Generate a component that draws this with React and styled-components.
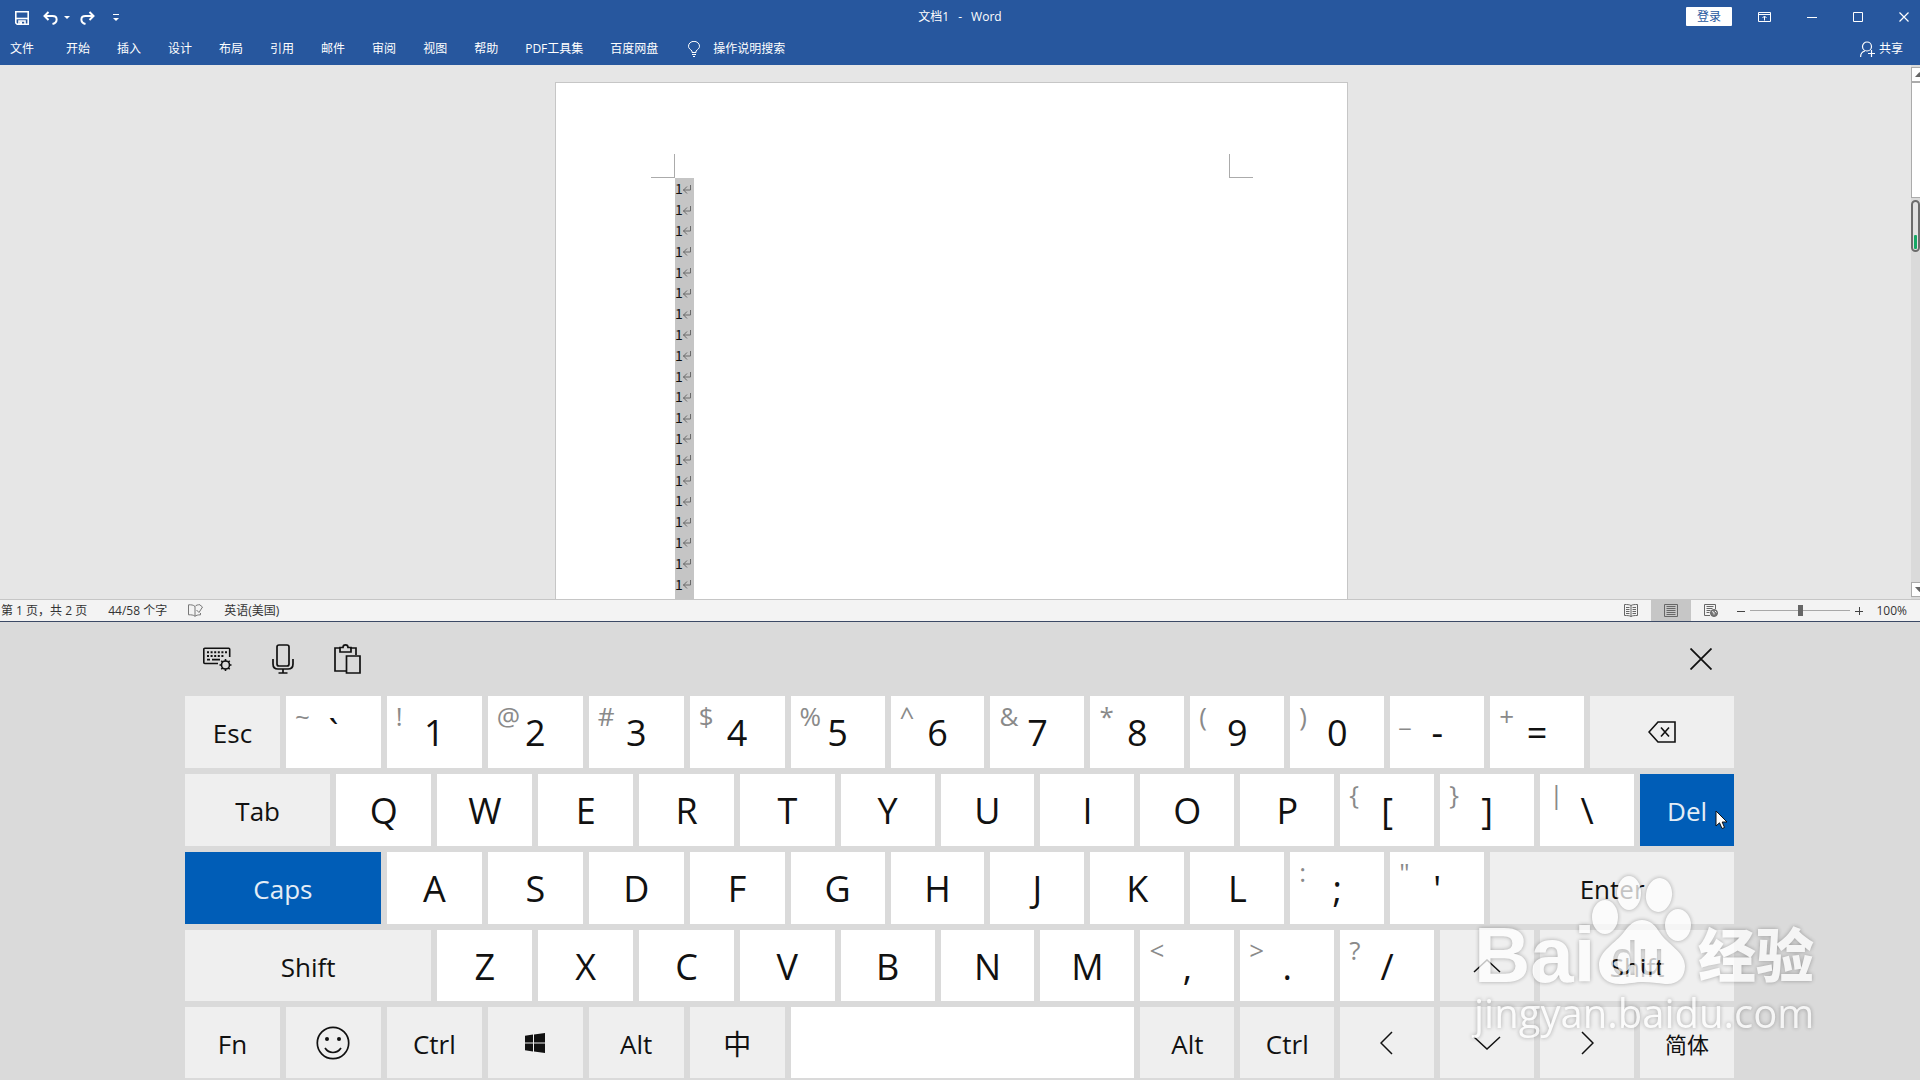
import React from "react";
import styled, { createGlobalStyle, css } from "styled-components";

const GlobalStyle = createGlobalStyle`
  *, *::before, *::after { box-sizing: border-box; }
  body {
    margin: 0;
    font-family: "Open Sans", "Noto Sans CJK SC", sans-serif;
    font-size: 12px;
    background: #dadada;
  }
  button, input { font: inherit; color: inherit; }
  button { border: 0; padding: 0; background: none; }
  svg { display: block; }
`;

const Screen = styled.div`
  display: flex;
  flex-direction: column;
  height: 100vh;
  overflow: hidden;
`;

/* ---------- Word window ---------- */

const WordWindow = styled.section`
  display: flex;
  flex-direction: column;
  flex: none;
  height: 622px;
  border-bottom: 1px solid #3c4a66;
`;

const Header = styled.header`
  flex: none;
  background: #27579e;
  color: #fff;
`;

const TitleBar = styled.div`
  display: grid;
  grid-template-columns: 1fr auto 1fr;
  align-items: center;
  height: 33px;
`;

const QuickAccess = styled.div`
  display: flex;
  align-items: center;
  gap: 10px;
  padding: 2px 0 0 15px;
  height: 33px;
`;

const QuickGroup = styled.div`
  display: flex;
  align-items: center;
  gap: 6px;
  margin-left: ${(p) => (p.$wide ? 8 : 4)}px;
`;

const IconButton = styled.button`
  display: grid;
  place-items: center;
`;

const Title = styled.h1`
  display: flex;
  gap: 9px;
  margin: 0;
  font-size: 12px;
  font-weight: 400;
  line-height: 18px;
`;

const WindowControls = styled.div`
  display: flex;
  justify-content: flex-end;
  align-items: center;
  padding-right: 11px;
  gap: 36px;
`;

const LoginButton = styled.button`
  width: 46px;
  height: 19px;
  margin-right: -10px;
  border-radius: 1px;
  background: #fff;
  color: #27579e;
  line-height: 18px;
`;

const Ribbon = styled.nav`
  display: flex;
  align-items: center;
  gap: 27px;
  height: 32px;
  padding: 0 17px 0 10px;
`;

const Tab = styled.button`
  line-height: 18px;
  white-space: nowrap;
  margin-right: ${(p) => (p.$file ? 5 : 0)}px;
`;

const IconLabelButton = styled.button`
  display: flex;
  align-items: center;
  gap: ${(p) => p.$gap}px;
  margin-left: ${(p) => (p.$end ? "auto" : "3px")};
  line-height: 18px;
  white-space: nowrap;
`;

const Workspace = styled.main`
  display: flex;
  flex: 1;
  min-height: 0;
  background: #e6e6e6;
`;

const Canvas = styled.div`
  flex: 1;
  display: flex;
  justify-content: center;
  padding: 17px 8px 0 0;
  overflow: hidden;
`;

const Paper = styled.article`
  display: flex;
  flex-direction: column;
  width: 793px;
  padding-top: 71px;
  background: #fff;
  border: 1px solid #c6c6c6;
  border-bottom: 0;
`;

const CropMarks = styled.div`
  display: flex;
  justify-content: space-between;
  flex: none;
  padding: 0 94px 0 95px;
`;

const CropMark = styled.span`
  width: 24px;
  height: 24px;
  border-bottom: 1px solid #ababab;
  ${(p) => (p.$right ? "border-left" : "border-right")}: 1px solid #ababab;
`;

const Selection = styled.div`
  flex: 1;
  width: 19px;
  margin-left: 119px;
  background: #c5c5c5;
`;

const Lines = styled.div`
  display: grid;
  grid-auto-rows: 1fr;
  height: 416px;
`;

const Line = styled.p`
  display: flex;
  align-items: center;
  margin: 0;
  color: #111;
  font-family: "Noto Sans CJK SC", sans-serif;
  font-size: 14px;
  line-height: 20px;
`;

const ScrollTrack = styled.div`
  flex: none;
  width: 9px;
  padding-top: 2px;
  overflow: hidden;
  background: #dadada;
  display: flex;
  flex-direction: column;
`;

const ScrollButton = styled.button`
  flex: none;
  display: grid;
  place-items: center;
  width: 17px;
  height: 15px;
  border: 1px solid #ababab;
  background: #fff;
  margin-top: ${(p) => (p.$end ? "auto" : "0")};
  margin-bottom: ${(p) => (p.$end ? "2px" : "0")};
`;

const ScrollThumb = styled.div`
  flex: none;
  width: 17px;
  height: 116px;
  border: 1px solid #ababab;
  background: #fff;
`;

const Meter = styled.div`
  flex: none;
  display: flex;
  align-items: flex-end;
  width: 9px;
  height: 52px;
  margin-top: 2px;
  padding: 1px;
  border: 2px solid #6c6c6c;
  border-radius: 5px;
  background: #e2e2e2;
`;

const MeterFill = styled.div`
  width: 3px;
  height: 14px;
  border-radius: 1px;
  background: #16a765;
`;

const StatusBar = styled.footer`
  display: flex;
  align-items: center;
  justify-content: space-between;
  flex: none;
  height: 22px;
  padding-left: 1px;
  border-top: 1px solid #c6c6c6;
  background: #f3f3f3;
  color: #333;
  line-height: 20px;
  white-space: nowrap;
`;

const StatusGroup = styled.div`
  display: flex;
  align-items: center;
  height: 100%;
  gap: ${(p) => p.$gap || 0}px;
`;

const ViewButton = styled.button`
  display: grid;
  place-items: center;
  width: 40px;
  height: 100%;
  background: ${(p) => (p.$active ? "#c6c6c6" : "transparent")};
`;

const ZoomGroup = styled.div`
  display: flex;
  align-items: center;
  gap: 5px;
  padding: 0 13px 0 6px;
`;

const ZoomSlider = styled.input`
  appearance: none;
  width: 100px;
  height: 12px;
  margin: 0;
  background: linear-gradient(#a8a8a8, #a8a8a8) center / 100% 1px no-repeat;
  &::-webkit-slider-thumb {
    appearance: none;
    width: 5px;
    height: 11px;
    background: #666;
  }
`;

const ZoomValue = styled.button`
  margin-left: 8px;
  line-height: 20px;
`;

/* ---------- Touch keyboard ---------- */

const Keyboard = styled.section`
  position: relative;
  display: flex;
  flex-direction: column;
  flex: 1;
  padding: 0 186px 2px 185px;
  background: #dadada;
  color: #111;
`;

const KeyboardBar = styled.div`
  display: flex;
  align-items: center;
  justify-content: space-between;
  flex: none;
  height: 74px;
  padding-right: 22px;
`;

const Tools = styled.div`
  display: grid;
  grid-template-columns: repeat(3, 65px);
`;

const KeyGrid = styled.div`
  flex: 1;
  display: grid;
  grid-template-columns: repeat(12, 89fr) repeat(19, 88fr);
  grid-template-rows: repeat(3, 72fr) repeat(2, 71fr);
  gap: 6px;
`;

const keyTone = {
  letter: css`background: #fff; font-size: 36px;`,
  control: css`background: #efefef; font-size: 26px;`,
  pressed: css`background: #005db7; color: #e4edf6; font-size: 26px;`,
};

const Key = styled.button`
  position: relative;
  display: grid;
  place-items: center;
  grid-column: span ${(p) => p.$span};
  min-width: 0;
  ${(p) => keyTone[p.$tone]}
`;

const KeyMain = styled.span`
  grid-area: 1 / 1;
  padding-top: 2px;
  line-height: 48px;
  ${(p) => p.$size && `font-size: ${p.$size}px;`}
`;

const KeyAlt = styled.span`
  grid-area: 1 / 1;
  place-self: start;
  padding: 4px 0 0 9px;
  color: #8a8a8a;
  font-size: 26px;
  line-height: 32px;
`;

const Pointer = styled.svg`
  position: absolute;
  left: 75px;
  top: 36px;
`;

/* ---------- Watermark ---------- */

const Watermark = styled.div`
  position: absolute;
  right: 102px;
  bottom: 43px;
  width: 344px;
  color: #fff;
  opacity: 0.75;
  pointer-events: none;
  filter: drop-shadow(0 0 2px rgba(0, 0, 0, 0.4));
`;

const Brand = styled.div`
  display: flex;
  align-items: flex-end;
  height: 118px;
`;

const BrandLatin = styled.span`
  flex: none;
  width: 116px;
  font: 700 78px/74px "Liberation Sans", sans-serif;
`;

const BrandHan = styled.span`
  margin-left: auto;
  padding-right: 4px;
  font: 900 58px/80px "Noto Sans CJK SC", sans-serif;
  white-space: nowrap;
`;

const BrandUrl = styled.div`
  font-size: 40px;
  line-height: 48px;
  margin-top: -3px;
  white-space: nowrap;
`;

/* ---------- Icons ---------- */

const SaveIcon = () => (
  <svg width="14" height="14" viewBox="0 0 14 14" fill="none" stroke="#fff" strokeWidth="1.6">
    <path d="M.8.8h12.4v12.4H2.2L.8 11.8z" />
    <path d="M1 7.5h12" />
    <path d="M4 13v-3h6v3" />
    <path d="M6 10.5v2.5" strokeWidth="2" />
  </svg>
);

const UndoIcon = ({ flip }) => (
  <svg width="15" height="14" viewBox="0 0 15 14" fill="none" stroke="#fff" strokeWidth="2">
    <g transform={flip ? "translate(15 0) scale(-1 1)" : undefined}>
      <path d="M5.5 1 1.5 5l4 4" />
      <path d="M2 5h7.5c5.5 0 5.500 6.500 0 8" />
    </g>
  </svg>
);

const CaretIcon = ({ bar }) => (
  <svg width="6" height="8" viewBox="0 0 6 8" fill="#fff">
    {bar && <path d="M0 0h6v1H0z" />}
    <path d={bar ? "M0 4h6L3 7z" : "M0 2h6L3 5z"} />
  </svg>
);

const RibbonIcon = () => (
  <svg width="13" height="10" viewBox="0 0 13 10" fill="none" stroke="#fff">
    <path d="M.5.5h12v9H.5zM.5 2.500h12M6.500 8.500v-4M4.500 6l2-2 2 2" />
  </svg>
);

const MinimizeIcon = () => (
  <svg width="10" height="10" viewBox="0 0 10 10" stroke="#fff"><path d="M0 5.500h10" /></svg>
);

const MaximizeIcon = () => (
  <svg width="10" height="10" viewBox="0 0 10 10" fill="none" stroke="#fff"><path d="M.5.5h9v9h-9z" /></svg>
);

const CloseIcon = ({ size = 10, color = "#fff", weight = 1.2 }) => (
  <svg width={size} height={size} viewBox={`0 0 ${size} ${size}`} stroke={color} strokeWidth={weight}>
    <path d={`M.5.5 ${size - 0.5} ${size - 0.5}M${size - 0.5}.5.5 ${size - 0.5}`} />
  </svg>
);

const BulbIcon = () => (
  <svg width="12" height="16" viewBox="0 0 12 16" fill="none" stroke="#fff">
    <path d="M4 11.500V10C2.500 8.500.5 7.500.5 5.200a5.300 4.700 0 0 1 11 0C11.500 7.500 9.500 8.500 8 10v1.500zM4 13.500h4M5 15.500h2" />
  </svg>
);

const PersonIcon = () => (
  <svg width="16" height="17" viewBox="0 0 16 17" fill="none" stroke="#fff" strokeWidth="1.200">
    <circle cx="7" cy="5.500" r="4.500" />
    <path d="M.6 16c0-4 2-5.500 4.400-6M11.500 9v7M8 12.500h7" />
  </svg>
);

const ReturnMark = () => (
  <svg width="9" height="11" viewBox="0 0 9 11" fill="none" stroke="#6a6a6a">
    <path d="M7.500 2v5H0M4 3.500 .6 7 4 10.500" />
  </svg>
);

const Arrow = ({ down }) => (
  <svg width="9" height="5" viewBox="0 0 9 5" fill="#666">
    <path d={down ? "M0 0h9L4.500 5z" : "M0 5h9L4.500 0z"} />
  </svg>
);

const ProofIcon = () => (
  <svg width="15" height="13" viewBox="0 0 15 13" fill="none" stroke="#777">
    <path d="M7 2.500C5.500.8 3 .8.5.8v10c2.500 0 5 0 6.500 1.500zM7 2.500C8 1 10 .7 12 .7M7 12.300c1-1 3-1.500 5.500-1.500V9M8.500 6l2.500 2.500L14.500 3 12 1" />
  </svg>
);

const ReadIcon = () => (
  <svg width="14" height="13" viewBox="0 0 14 13" fill="none" stroke="#666">
    <path d="M7 1.500C5.500.5 3 .5.5.5v11c2.500 0 5 0 6.500 1 1.500-1 4-1 6.500-1V.5C11 .5 8.500.5 7 1.500zM7 1.500v11M2 3.500h3.500M2 5.500h3.500M2 7.500h3.500M2 9.500h3.500M8.500 3.500H12M8.500 5.500H12M8.500 7.500H12M8.500 9.500H12" />
  </svg>
);

const PrintIcon = () => (
  <svg width="14" height="13" viewBox="0 0 14 13" fill="none" stroke="#666">
    <path d="M.5.5h13v12H.5zM2.500 2.500h9M2.500 4.500h9M2.500 6.500h9M2.500 8.500h9M2.500 10.500h9" />
  </svg>
);

const WebIcon = () => (
  <svg width="14" height="13" viewBox="0 0 14 13" fill="none" stroke="#666">
    <path d="M6 11.500H.5V.5h11V5M2.500 2.500h7M2.500 4.500h6M2.500 6.500h4M2.500 8.500h3" />
    <circle cx="10" cy="9" r="3.500" fill="#777" />
    <path d="M8 7.500l2 1v2M11 7l1.500 1.500" stroke="#f3f3f3" />
  </svg>
);

const StepIcon = ({ plus }) => (
  <svg width="8" height="8" viewBox="0 0 8 8" fill="none" stroke="#444">
    <path d={plus ? "M0 4.500h8M4.500 0v8" : "M0 4.500h8"} />
  </svg>
);

const KeyboardIcon = () => (
  <svg width="30" height="25" viewBox="0 0 30 25" fill="none" stroke="#111" strokeWidth="1.600">
    <path d="M15 16.500H1.800a1 1 0 0 1-1-1V2.300a1 1 0 0 1 1-1h23.900a1 1 0 0 1 1 1V10" />
    <path d="M4 5.300h20M4 9h17" strokeDasharray="2 1.600" strokeWidth="2" />
    <path d="M4 12.700h3M9 12.700h8" strokeWidth="1.800" />
    <circle cx="22.500" cy="18" r="4" />
    <path d="M22.500 12v2.200M22.500 21.800V24M16.500 18h2.200M26.300 18h2.200M18.300 13.800l1.500 1.500M25.200 20.700l1.500 1.500M26.700 13.800l-1.500 1.500M19.800 20.700l-1.500 1.500" />
  </svg>
);

const MicIcon = () => (
  <svg width="22" height="30" viewBox="0 0 22 30" fill="none" stroke="#111" strokeWidth="1.700">
    <rect x="5" y="1" width="12" height="21" rx="2" />
    <path d="M1 15v5c0 3 1.500 5 5 5h10c3.500 0 5-2 5-5v-5M11 25v4M6.500 29h9" />
  </svg>
);

const ClipboardIcon = () => (
  <svg width="27" height="30" viewBox="0 0 27 30" fill="none" stroke="#111" strokeWidth="1.700">
    <path d="M12 27H1V4h5M16 4h6v7" />
    <path d="M6 3.500h3c0-3.500 5-3.500 5 0h3V8H6z" />
    <path d="M12.500 12H26v17H12.500z" />
  </svg>
);

const BackspaceIcon = () => (
  <svg width="28" height="22" viewBox="0 0 28 22" fill="none" stroke="#111" strokeWidth="1.600">
    <path d="M10 1h17v20H10L1 11zM13 6.500l8 9M21 6.500l-8 9" />
  </svg>
);

const SmileIcon = () => (
  <svg width="34" height="34" viewBox="0 0 34 34" fill="none" stroke="#111" strokeWidth="1.700">
    <circle cx="17" cy="17" r="15.700" />
    <path d="M9 22c4 6 12 6 16 0" />
    <circle cx="11" cy="13" r="2" fill="#111" stroke="none" />
    <circle cx="23" cy="13" r="2" fill="#111" stroke="none" />
  </svg>
);

const WindowsIcon = () => (
  <svg width="20" height="20" viewBox="0 0 20 20" fill="#111">
    <path d="M0 2.700 8 1.600v7.900H0zM9 1.400 20 0v9.500H9zM0 10.500h8v7.900l-8-1.100zM9 10.500h11V20L9 18.600z" />
  </svg>
);

const chevrons = {
  up: ["M1 13 14 1 27 13", 28, 14],
  down: ["M1 1 14 13 27 1", 28, 14],
  left: ["M12 1 1 12 12 23", 14, 24],
  right: ["M2 1 13 12 2 23", 14, 24],
};

const Chevron = ({ dir }) => {
  const [d, w, h] = chevrons[dir];
  return (
    <svg width={w} height={h} viewBox={`0 0 ${w} ${h}`} fill="none" stroke="#111" strokeWidth="1.500">
      <path d={d} />
    </svg>
  );
};

const PawSvg = styled.svg`
  flex: none;
`;

const Paw = () => (
  <PawSvg width="104" height="118" viewBox="0 0 104 118">
    <mask id="paw-cut">
      <rect width="104" height="118" fill="#fff" />
      <text x="21" y="101" fontFamily="Liberation Sans, sans-serif" fontSize="48" fill="#000">du</text>
    </mask>
    <g fill="#fff" mask="url(#paw-cut)">
      <ellipse cx="15" cy="43" rx="13" ry="17" />
      <ellipse cx="39" cy="19" rx="12" ry="17" />
      <ellipse cx="69" cy="21" rx="13" ry="17" transform="rotate(8 69 21)" />
      <ellipse cx="88" cy="51" rx="13" ry="16" />
      <path d="M52 46c8 0 13 5 18 13 7 11 25 19 25 33 0 12-8 19-20 18-8-1-14-2-22-2s-14 2-23 2c-13 0-21-7-21-19 0-14 17-22 25-33 5-7 10-12 18-12z" />
    </g>
  </PawSvg>
);

/* ---------- Data ---------- */

const tabs = ["文件", "开始", "插入", "设计", "布局", "引用", "邮件", "审阅", "视图", "帮助", "PDF工具集", "百度网盘"];

const letter = (main, alt) => ({ main, alt, tone: "letter", span: 2 });
const control = (main, span = 2, extra) => ({ main, span, tone: "control", ...extra });
const iconKey = (label, icon, span = 2) => ({ label, icon, span, tone: "control" });

const keys = [
  control("Esc"),
  ...["~`", "!1", "@2", "#3", "$4", "%5", "^6", "&7", "*8", "(9", ")0", "_-", "+="].map((k) => letter(k[1], k[0])),
  iconKey("Backspace", <BackspaceIcon />, 3),

  control("Tab", 3),
  ...[..."QWERTYUIOP"].map((k) => letter(k)),
  letter("[", "{"), letter("]", "}"), letter("\\", "|"),
  { main: "Del", span: 2, tone: "pressed", pointer: true },

  { main: "Caps", span: 4, tone: "pressed" },
  ...[..."ASDFGHJKL"].map((k) => letter(k)),
  letter(";", ":"), letter("'", '"'),
  control("Enter", 5),

  control("Shift", 5),
  ...[..."ZXCVBNM"].map((k) => letter(k)),
  letter(",", "<"), letter(".", ">"), letter("/", "?"),
  iconKey("Up", <Chevron dir="up" />),
  control("Shift", 4),

  control("Fn"),
  iconKey("Emoji", <SmileIcon />),
  control("Ctrl"),
  iconKey("Windows", <WindowsIcon />),
  control("Alt"),
  control("中", 2, { size: 28 }),
  { label: "Space", span: 7, tone: "letter" },
  control("Alt"),
  control("Ctrl"),
  iconKey("Left", <Chevron dir="left" />),
  iconKey("Down", <Chevron dir="down" />),
  iconKey("Right", <Chevron dir="right" />),
  control("简体", 2, { size: 22 }),
];

/* ---------- App ---------- */

export default function App() {
  return (
    <Screen>
      <GlobalStyle />
      <WordWindow>
        <Header>
          <TitleBar>
            <QuickAccess>
              <IconButton aria-label="保存"><SaveIcon /></IconButton>
              <QuickGroup>
                <IconButton aria-label="撤消"><UndoIcon /></IconButton>
                <IconButton aria-label="撤消选项"><CaretIcon /></IconButton>
              </QuickGroup>
              <IconButton aria-label="恢复"><UndoIcon flip /></IconButton>
              <QuickGroup $wide>
                <IconButton aria-label="自定义"><CaretIcon bar /></IconButton>
              </QuickGroup>
            </QuickAccess>
            <Title><span>文档1</span><span>-</span><span>Word</span></Title>
            <WindowControls>
              <LoginButton>登录</LoginButton>
              <IconButton aria-label="功能区显示选项"><RibbonIcon /></IconButton>
              <IconButton aria-label="最小化"><MinimizeIcon /></IconButton>
              <IconButton aria-label="最大化"><MaximizeIcon /></IconButton>
              <IconButton aria-label="关闭"><CloseIcon /></IconButton>
            </WindowControls>
          </TitleBar>
          <Ribbon>
            {tabs.map((t, i) => <Tab key={t} $file={i === 0}>{t}</Tab>)}
            <IconLabelButton $gap={13}><BulbIcon />操作说明搜索</IconLabelButton>
            <IconLabelButton $gap={3} $end><PersonIcon />共享</IconLabelButton>
          </Ribbon>
        </Header>

        <Workspace>
          <Canvas>
            <Paper>
              <CropMarks><CropMark /><CropMark $right /></CropMarks>
              <Selection>
                <Lines>
                  {Array.from({ length: 20 }, (_, i) => <Line key={i}>1<ReturnMark /></Line>)}
                </Lines>
              </Selection>
            </Paper>
          </Canvas>
          <ScrollTrack>
            <ScrollButton aria-label="向上"><Arrow /></ScrollButton>
            <ScrollThumb />
            <Meter><MeterFill /></Meter>
            <ScrollButton aria-label="向下" $end><Arrow down /></ScrollButton>
          </ScrollTrack>
        </Workspace>

        <StatusBar>
          <StatusGroup $gap={21}>
            <span>第 1 页，共 2 页</span>
            <span>44/58 个字</span>
            <ProofIcon />
            <span>英语(美国)</span>
          </StatusGroup>
          <StatusGroup>
            <ViewButton aria-label="阅读视图"><ReadIcon /></ViewButton>
            <ViewButton aria-label="页面视图" $active><PrintIcon /></ViewButton>
            <ViewButton aria-label="Web 版式视图"><WebIcon /></ViewButton>
            <ZoomGroup>
              <IconButton aria-label="缩小"><StepIcon /></IconButton>
              <ZoomSlider type="range" aria-label="缩放" min="0" max="200" defaultValue="100" />
              <IconButton aria-label="放大"><StepIcon plus /></IconButton>
              <ZoomValue>100%</ZoomValue>
            </ZoomGroup>
          </StatusGroup>
        </StatusBar>
      </WordWindow>

      <Keyboard>
        <KeyboardBar>
          <Tools>
            <IconButton aria-label="键盘设置"><KeyboardIcon /></IconButton>
            <IconButton aria-label="语音"><MicIcon /></IconButton>
            <IconButton aria-label="剪贴板"><ClipboardIcon /></IconButton>
          </Tools>
          <IconButton aria-label="关闭键盘"><CloseIcon size={22} color="#111" weight={1.8} /></IconButton>
        </KeyboardBar>
        <KeyGrid>
          {keys.map((k, i) => (
            <Key key={i} $span={k.span} $tone={k.tone} aria-label={k.label}>
              {k.alt && <KeyAlt>{k.alt}</KeyAlt>}
              {k.main && <KeyMain $size={k.size}>{k.main}</KeyMain>}
              {k.icon}
              {k.pointer && (
                <Pointer width="14" height="20" viewBox="0 0 14 20">
                  <path d="M1 1v15l3.500-3.200L7 18.500l2.500-1L7.200 12H12z" fill="#fff" stroke="#111" />
                </Pointer>
              )}
            </Key>
          ))}
        </KeyGrid>
        <Watermark aria-hidden="true">
          <Brand>
            <BrandLatin>Bai</BrandLatin>
            <Paw />
            <BrandHan>经验</BrandHan>
          </Brand>
          <BrandUrl>jingyan.baidu.com</BrandUrl>
        </Watermark>
      </Keyboard>
    </Screen>
  );
}
